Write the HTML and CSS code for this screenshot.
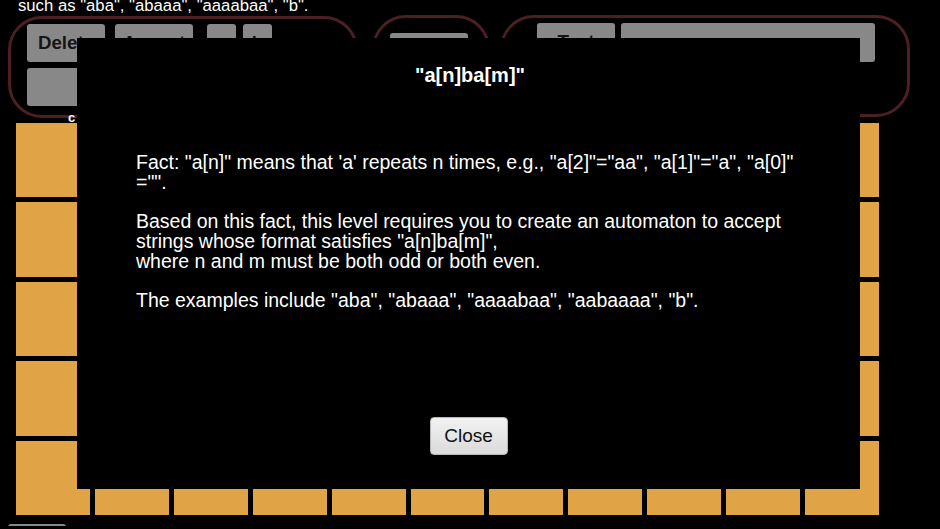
FILE: index.html
```html
<!DOCTYPE html>
<html lang="en">
<head>
<meta charset="utf-8">
<title>a[n]ba[m]</title>
<link rel="stylesheet" href="styles.css">
</head>
<body>
<div class="page">
  <p class="intro">such as "aba", "abaaa", "aaaabaa", "b".</p>

  <div class="toolbar">
    <div class="panel panel-edit">
      <div class="btn-row">
        <button class="btn">Delete</button>
        <button class="btn">Accept</button>
        <div class="letters">
          <button class="btn btn-letter">a</button>
          <button class="btn btn-letter">b</button>
        </div>
      </div>
      <div class="btn-row">
        <button class="btn" aria-label="Add"></button>
      </div>
      <span class="panel-label">c</span>
    </div>
    <div class="panel panel-mid">
      <button class="btn">Reset</button>
    </div>
    <div class="panel panel-test">
      <div class="btn-row">
        <button class="btn">Test</button>
        <input class="test-input" type="text" value="">
      </div>
    </div>
  </div>

  <div class="board">
    <div class="cell"></div><div class="cell"></div><div class="cell"></div><div class="cell"></div><div class="cell"></div><div class="cell"></div><div class="cell"></div><div class="cell"></div><div class="cell"></div><div class="cell"></div><div class="cell"></div>
    <div class="cell"></div><div class="cell"></div><div class="cell"></div><div class="cell"></div><div class="cell"></div><div class="cell"></div><div class="cell"></div><div class="cell"></div><div class="cell"></div><div class="cell"></div><div class="cell"></div>
    <div class="cell"></div><div class="cell"></div><div class="cell"></div><div class="cell"></div><div class="cell"></div><div class="cell"></div><div class="cell"></div><div class="cell"></div><div class="cell"></div><div class="cell"></div><div class="cell"></div>
    <div class="cell"></div><div class="cell"></div><div class="cell"></div><div class="cell"></div><div class="cell"></div><div class="cell"></div><div class="cell"></div><div class="cell"></div><div class="cell"></div><div class="cell"></div><div class="cell"></div>
    <div class="cell"></div><div class="cell"></div><div class="cell"></div><div class="cell"></div><div class="cell"></div><div class="cell"></div><div class="cell"></div><div class="cell"></div><div class="cell"></div><div class="cell"></div><div class="cell"></div>
  </div>

  <div class="footer">
    <button class="btn btn-small" aria-label="Back"></button>
  </div>
</div>

<div class="modal">
  <h2 class="modal-title">"a[n]ba[m]"</h2>
  <div class="modal-body">Fact: "a[n]" means that 'a' repeats n times, e.g., "a[2]"="aa", "a[1]"="a", "a[0]"<br>="".<br><br>Based on this fact, this level requires you to create an automaton to accept<br>strings whose format satisfies "a[n]ba[m]",<br>where n and m must be both odd or both even.<br><br>The examples include "aba", "abaaa", "aaaabaa", "aabaaaa", "b".</div>
  <button class="close-btn">Close</button>
</div>
</body>
</html>
```
FILE: styles.css
```css
html, body {
  margin: 0;
  padding: 0;
  background: #000;
  overflow: hidden;
}

body {
  font-family: "Liberation Sans", Arial, Helvetica, sans-serif;
  color: #fff;
}

.page {
  width: 940px;
  height: 529px;
}

.intro {
  margin: -3px 0 0 18px;
  font-size: 16.7px;
  line-height: 18px;
  color: #fff;
}

.toolbar {
  display: flex;
  align-items: flex-start;
  padding-left: 8px;
}

.panel {
  position: relative;
  box-sizing: border-box;
  height: 102px;
  border: 3px solid #4d1f24;
  border-radius: 34px;
}

.panel-edit {
  width: 350px;
  margin-top: 1px;
  padding: 5px 0 0 16px;
  display: flex;
  flex-direction: column;
  gap: 6px;
}

.panel-mid {
  width: 118px;
  margin-left: 14px;
  padding: 15px 0 0 15px;
}

.panel-test {
  width: 410px;
  margin-left: 10px;
  padding: 5px 0 0 34px;
}

.btn-row {
  display: flex;
  gap: 10px;
}

.panel-test .btn-row {
  gap: 6px;
}

.letters {
  display: flex;
  gap: 7px;
  margin-left: 4px;
}

.btn {
  box-sizing: border-box;
  width: 78px;
  height: 38px;
  padding: 0;
  border: none;
  border-radius: 3px;
  background: #888;
  color: #151515;
  font-family: "Liberation Sans", Arial, Helvetica, sans-serif;
  font-weight: bold;
  font-size: 18.7px;
}

.btn-letter {
  width: 29px;
}

.test-input {
  box-sizing: border-box;
  width: 254px;
  height: 39px;
  border: none;
  border-radius: 3px;
  background: #888;
  padding: 0 8px;
  font-family: "Liberation Sans", Arial, sans-serif;
  font-size: 18px;
}

.panel-label {
  position: absolute;
  left: 57px;
  bottom: -10px;
  font-weight: bold;
  font-size: 13px;
  color: #fff;
}

.board {
  display: grid;
  grid-template-columns: repeat(11, 1fr);
  grid-template-rows: repeat(5, 74.4px);
  gap: 5px;
  width: 863px;
  margin: 5px 0 0 16px;
}

.cell {
  background: #e0a346;
}

.footer {
  display: flex;
  padding-left: 8px;
  margin-top: 9px;
}

.btn-small {
  width: 58px;
  height: 30px;
  font-size: 14px;
}

.modal {
  position: fixed;
  left: 77px;
  top: 38px;
  box-sizing: border-box;
  width: 783px;
  height: 451px;
  background: #000;
  display: flex;
  flex-direction: column;
  padding-bottom: 34px;
}

.modal-title {
  margin: 0;
  padding: 25px 0 0 3px;
  text-align: center;
  font-size: 20px;
  line-height: 24px;
  font-weight: bold;
  color: #fff;
}

.modal-body {
  margin-top: 66px;
  padding-left: 59px;
  font-size: 19.5px;
  line-height: 19.7px;
  white-space: nowrap;
  color: #fff;
}

.close-btn {
  margin-top: auto;
  align-self: center;
  box-sizing: border-box;
  width: 78px;
  height: 38px;
  border: 1px solid #b8b8b8;
  border-radius: 4px;
  background: linear-gradient(#f2f2f2, #dadada);
  color: #111;
  font-family: "Liberation Sans", Arial, Helvetica, sans-serif;
  font-size: 19px;
  padding: 0;
}
```
